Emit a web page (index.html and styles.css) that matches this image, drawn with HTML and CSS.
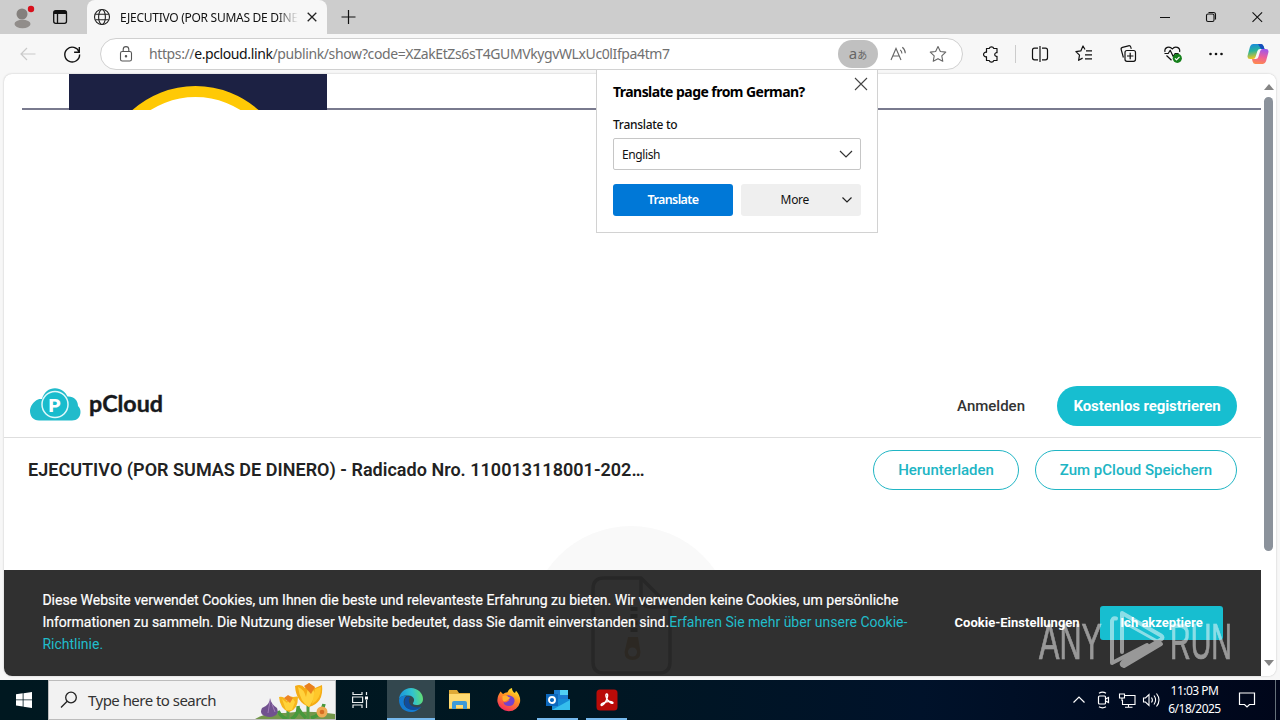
FILE: index.html
```html
<!DOCTYPE html>
<html lang="en">
<head>
<meta charset="utf-8">
<title>pCloud</title>
<link rel="stylesheet" href="styles.css">
</head>
<body>
<div class="desktop">
  <header class="titlebar">
    <svg class="avatar" width="40" height="34" viewBox="0 0 40 34"><circle cx="22" cy="14" r="5.5" fill="#84807d"/><ellipse cx="22.5" cy="24" rx="8" ry="4.2" fill="#918d8a"/><circle cx="31" cy="9" r="3.2" fill="#d8101c"/></svg>
    <svg class="tabmenu" width="40" height="34" viewBox="0 0 40 34" fill="none" stroke="#111" stroke-width="1.3"><rect x="13.7" y="10.7" width="12.8" height="12.6" rx="2"/><path d="M14 12.5h12" stroke-width="3"/><path d="M17.5 13v10"/></svg>
    <div class="tab">
      <svg width="18" height="18" viewBox="0 0 18 18" fill="none" stroke="#222" stroke-width="1.1"><circle cx="9" cy="9" r="7.5"/><ellipse cx="9" cy="9" rx="3.4" ry="7.5"/><path d="M2.3 6.2h13.4M2.3 11.8h13.4"/></svg>
      <span class="tab-title">EJECUTIVO (POR SUMAS DE DINERO)</span>
      <svg width="12" height="12" viewBox="0 0 12 12" stroke="#222" stroke-width="1.3"><path d="M1.7 1.7l8.6 8.6M10.3 1.7l-8.6 8.6"/></svg>
    </div>
    <svg class="newtab" width="16" height="16" viewBox="0 0 16 16" stroke="#111" stroke-width="1.2"><path d="M8.500 1v14M1.500 8h14"/></svg>
    <div class="window-controls">
      <svg width="46" height="34" viewBox="0 0 46 34" stroke="#111"><path d="M18 17.500h10"/></svg>
      <svg width="46" height="34" viewBox="0 0 46 34" fill="none" stroke="#111" stroke-width="1.1"><rect x="18.500" y="14" width="7.500" height="7.500" rx="1.500"/><path d="M20.500 12.500h5a2 2 0 0 1 2 2v5"/></svg>
      <svg width="46" height="34" viewBox="0 0 46 34" stroke="#111" stroke-width="1.1"><path d="M18.500 12.300l9.600 9.600M28.100 12.300l-9.600 9.600"/></svg>
    </div>
  </header>

  <div class="toolbar">
    <svg class="back" width="18" height="16" viewBox="0 0 18 16" fill="none" stroke="#c9c9c9" stroke-width="1.2"><path d="M16.500 8H2M8 2L2 8l6 6"/></svg>
    <svg class="reload" width="20" height="20" viewBox="0 0 20 20" fill="none" stroke="#111" stroke-width="1.4"><path d="M17.200 8.200A7.400 7.400 0 1 0 17.600 10.500"/><path d="M17.300 3v5.200h-5.200"/></svg>
    <div class="address">
      <svg class="lock" width="16" height="18" viewBox="0 0 16 18" fill="none" stroke="#555" stroke-width="1.1"><rect x="2.500" y="6.500" width="11" height="9.500" rx="1.800"/><path d="M5.200 6.500V4.400a2.800 2.800 0 0 1 5.600 0v2.100"/><circle cx="8" cy="11.200" r=".7" fill="#555"/></svg>
      <span class="url">https://<b>e.pcloud.link</b>/publink/show?code=XZakEtZs6sT4GUMVkygvWLxUc0lIfpa4tm7</span>
      <span class="translate-pill"><span class="latin">a</span><span class="kana">あ</span></span>
      <svg class="bar-icon" width="40" height="28" viewBox="0 0 40 28" fill="none" stroke="#666" stroke-width="1.1"><path d="M13 20L18 8.500 23 20M14.800 16h6.400M22.200 9.800q1.700 1.400 1.700 3.600M24.300 7.200q3 2.400 3 6"/></svg>
      <svg class="bar-icon" width="40" height="28" viewBox="0 0 40 28" fill="none" stroke="#666" stroke-width="1.1" stroke-linejoin="round"><path d="M20 6.500l2.350 4.950 5.400.7-3.950 3.750.97 5.350L20 18.650l-4.770 2.600.97-5.350-3.950-3.750 5.400-.7z"/></svg>
    </div>
    <div class="tools">
      <svg class="tool" viewBox="0 0 44 40" fill="none" stroke="#111" stroke-width="1.2" stroke-linejoin="round"><path d="M17.500 14.500h2.700a2.400 2.400 0 0 1 4.600 0H28v4.200h-1a1.900 1.900 0 0 0 0 3.600h1v4.200h-3.200a2.400 2.400 0 0 1-4.600 0h-2.700v-3.800a2.300 2.300 0 1 1 0-4.400z"/></svg>
      <span class="tool-separator"></span>
      <svg class="tool" viewBox="0 0 44 40" fill="none" stroke="#111" stroke-width="1.2"><path d="M20 14.200h-3.500a2 2 0 0 0-2 2v7.600a2 2 0 0 0 2 2H20M24 14.200h3.500a2 2 0 0 1 2 2v7.600a2 2 0 0 1-2 2H24M22 12v16"/></svg>
      <svg class="tool" viewBox="0 0 44 40" fill="none" stroke="#111" stroke-width="1.2" stroke-linejoin="round"><path d="M23 15.500l-2-3.500-2.200 4.900-4.900.7 3.600 3.500-.9 5.200 4-2.200M24 16.800h6M23 20.800h7M23 24.800h7"/></svg>
      <svg class="tool" viewBox="0 0 44 40" fill="none" stroke="#111" stroke-width="1.2"><path d="M17.400 23.500l-2.200-7.800a1.900 1.900 0 0 1 1.300-2.300l5.900-1.600a2 2 0 0 1 2.400 1.400l.5 1.600"/><rect x="19" y="16.500" width="10.500" height="10.800" rx="2"/><path d="M24.200 18.800v6.400M21 22h6.400"/></svg>
      <svg class="tool" viewBox="0 0 44 40" fill="none" stroke="#111" stroke-width="1.2" stroke-linejoin="round"><path d="M15 18c-1-4.500 4.500-6.800 7.300-3 2.800-3.800 8.300-1.500 7.300 3M14.500 19.500h3.700l2-3.200 3 6.200 1.900-3h3.500M16.500 21.500l5 4.800"/><circle cx="27.300" cy="24.300" r="4.600" fill="#16801c" stroke="none"/><path d="M25 24.300l1.500 1.500 3-3" stroke="#fff"/></svg>
      <svg class="tool" viewBox="0 0 44 40" fill="#111"><circle cx="16.500" cy="20" r="1.300"/><circle cx="22" cy="20" r="1.300"/><circle cx="27.500" cy="20" r="1.300"/></svg>
      <svg class="copilot" width="22" height="22" viewBox="0 0 22 22"><defs><linearGradient id="cp1" x1="0" y1="0" x2=".2" y2="1"><stop offset="0" stop-color="#1784e6"/><stop offset=".5" stop-color="#28b49b"/><stop offset="1" stop-color="#f0c520"/></linearGradient><linearGradient id="cp2" x1=".5" y1="0" x2=".3" y2="1"><stop offset="0" stop-color="#a157e8"/><stop offset=".5" stop-color="#ed5f9a"/><stop offset="1" stop-color="#ff8b4c"/></linearGradient></defs><path d="M6 1h8q2 0 2.700 2.500L17.500 6H13q-2 0-2.600 2L8.500 14q-.6 2-2.500 2H3q-3.200 0-2.300-3.800L3 3.800Q3.800 1 6 1z" fill="url(#cp1)"/><path d="M11 1h3.200q1.800 0 2.500 2.500L17.500 6H14z" fill="#154fbd"/><path d="M16 21H8.400q-2 0-2.800-2.500L5 16h3.800q2 0 2.600-2l1.800-6q.6-2 2.500-2H19q3.200 0 2.300 3.800L19 18.200Q18 21 16 21z" fill="url(#cp2)"/></svg>
    </div>
  </div>

  <div class="viewport">
    <main class="page">
      <svg class="banner" width="1257" height="36" viewBox="0 0 1257 36"><path d="M18 35h1239" stroke="#4c4e68" stroke-width="1.600"/><path d="M65 0h258v36H65z" fill="#1c2143"/><circle cx="191.500" cy="107" r="89.500" fill="#fff" stroke="#ffc905" stroke-width="11"/></svg>
      <div class="blank"></div>
      <div class="site-header">
        <svg class="logo" width="136" height="38" viewBox="0 0 136 38"><path d="M10 35.500C4 35.500 1 31 1 26c0-5 3.500-9.500 8-11.500 1.500-.7 3.300-.3 4-.5C15 7 20 3.200 26 3.200S36.500 7 38.500 11.500c6-.5 10.500 3.500 10.500 9.500 1.500 1.500 2.500 3 2.500 6 0 5-3.500 8.500-8.500 8.500z" fill="#21bbcb"/><circle cx="26" cy="19.500" r="13" fill="#19bccd" stroke="#e0f8fb" stroke-width="1.500"/><text x="19.500" y="26.500" class="logo-p">P</text><text x="60" y="26.500" class="logo-name" textLength="74" lengthAdjust="spacingAndGlyphs">pCloud</text></svg>
        <a class="login">Anmelden</a>
        <a class="button filled">Kostenlos registrieren</a>
      </div>
      <div class="file-header">
        <h1>EJECUTIVO (POR SUMAS DE DINERO) - Radicado Nro. 110013118001-202…</h1>
        <a class="button download">Herunterladen</a>
        <a class="button save">Zum pCloud Speichern</a>
      </div>
      <div class="preview">
        <svg width="204" height="150" viewBox="0 0 204 150"><circle cx="102" cy="102" r="102" fill="#f9f9f9"/><path d="M75 52h37l29 29v55q0 11-11 11H75q-11 0-11-11V63q0-11 11-11z" fill="#fff" stroke="#555" stroke-width="3.500"/><path d="M112 52v19q0 10 10 10h19" fill="none" stroke="#555" stroke-width="3.500"/><path d="M105 81v28" stroke="#201500" stroke-width="7" stroke-dasharray="4 3"/><path d="M99 111h10l2.500 15q0 8-8 8t-8-8z" fill="#b06d00"/><circle cx="103.500" cy="126" r="4.500" fill="#fff"/></svg>
      </div>
      <div class="cookies">
        <p>Diese Website verwendet Cookies, um Ihnen die beste und relevanteste Erfahrung zu bieten. Wir verwenden keine Cookies, um persönliche<br>Informationen zu sammeln. Die Nutzung dieser Website bedeutet, dass Sie damit einverstanden sind.<a>Erfahren Sie mehr über unsere Cookie-<br>Richtlinie.</a></p>
        <a class="cookie-settings">Cookie-Einstellungen</a>
        <a class="accept"><span>Ich akzeptiere</span></a>
      </div>
    </main>
    <aside class="scrollbar">
      <svg width="10" height="6" viewBox="0 0 10 6"><path d="M0 6L5 0l5 6z" fill="#858585"/></svg>
      <span class="thumb"></span>
      <svg width="10" height="6" viewBox="0 0 10 6"><path d="M0 0h10L5 6z" fill="#858585"/></svg>
    </aside>
  </div>

  <footer class="taskbar">
    <div class="start"><svg width="16" height="16" viewBox="0 0 16 16" fill="#fff"><path d="M0 2.300L6.700 1.300V7.500H0zM7.500 1.200L16 0v7.500H7.500zM0 8.300h6.700v6.300L0 13.600zM7.500 8.300H16V16l-8.500-1.200z"/></svg></div>
    <div class="search">
      <svg width="18" height="18" viewBox="0 0 18 18" fill="none" stroke="#222" stroke-width="1.300"><circle cx="11" cy="6.500" r="5.300"/><path d="M7.200 10.300L1 16.500"/></svg>
      <span>Type here to search</span>
      <svg class="flowers" width="80" height="38" viewBox="0 0 80 38"><path d="M0 38Q10 31 30 32q25-3 50 1v5z" fill="#74974b"/><path d="M33 38V28M53 38V24" stroke="#519b43" stroke-width="3"/><path d="M36 38q8-4 7-13M32 38q-6-2-9-8M56 37q11-3 13-14M51 37q-5-4-8-10" stroke="#47983d" stroke-width="3.500" fill="none"/><path d="M24 16q5-1 8 4 3-5 6-4 5-1 5 0 0 13-9 15-9-3-10-15z" fill="#f6b51c"/><path d="M27 18l5 4 4-7 4 6-3 8h-6z" fill="#ffd33b"/><path d="M29 17l4-3 5 3-3 5z" fill="#ed8423"/><path d="M40 5q6-3 10 2l4-5 6 5 7-3q2 18-13 22Q41 21 40 5z" fill="#f5ac15"/><path d="M43 6q6 2 8 10l3-14 7 12-7 12q-9-5-11-20z" fill="#ffd23d"/><path d="M60 8l6-2q0 12-9 17z" fill="#ffc72a"/><path d="M49 5l5-3 6 4-4 7z" fill="#e9801e"/><path d="M15 17q1 6 7 10 3 8-7 9-12-1-8-9 8-3 8-10z" fill="#71518f"/><path d="M15 20l-2 12M17 23l3 8" stroke="#a27db9" fill="none"/><circle cx="67" cy="31" r="5.500" fill="#efaa53"/><circle cx="67" cy="31" r="2.300" fill="#d66e22"/></svg>
    </div>
    <div class="task view"><svg width="18" height="18" viewBox="0 0 18 18" fill="none" stroke="#e9edee" stroke-width="1.200"><path d="M2 1v2.500h9V1M2 17v-3h9v3M1.600 6h10v5.500h-10zM15.500 1v3M15.500 9v8"/><path d="M14 5.500h3v3h-3z" fill="#fff" stroke="none"/></svg></div>
    <div class="task active"><svg width="26" height="26" viewBox="0 0 26 26"><defs><linearGradient id="ed" x1="0" y1=".3" x2="1" y2=".2"><stop offset="0" stop-color="#1995dc"/><stop offset=".55" stop-color="#31c3cf"/><stop offset="1" stop-color="#65e06c"/></linearGradient></defs><path d="M1 13C1 6 6.500 1 13 1s12 5 12 11c0 4-3 6-6.500 6-3 0-4.300-1.100-3.300-2.300C17 13.500 16.500 9 10.500 8.500 5 8.200 1 10 1 13z" fill="url(#ed)"/><path d="M1 13C1.300 10 5 8.300 9 8.500c-4 2-5.500 11 2 13.500 4.500 1.500 9 .5 12-2.500C21 23 17 25 13 25 6 25 1 20 1 13z" fill="#147bd1"/><path d="M9 9.500c-4 3-3.500 11 3 13 4.500 1.200 8.500.2 11-2.700-5 1.800-11 0-12-5-.4-2 .2-3.600 1.300-4.500-.9-.7-2-1-3.300-.8z" fill="#104d9e"/></svg></div>
    <div class="task"><svg width="24" height="22" viewBox="0 0 24 22"><path d="M1 1h8l2 3h11v16H1z" fill="#dfaa37"/><path d="M1 5h21v14H1z" fill="#ffda71"/><path d="M6 12h11q2 0 2 2v6h-4v-4H8v4H4v-6q0-2 2-2z" fill="#3e9ad7"/></svg></div>
    <div class="task"><svg width="26" height="26" viewBox="0 0 26 26"><defs><linearGradient id="ff" x1=".8" y1="0" x2=".3" y2="1"><stop offset="0" stop-color="#fff02f"/><stop offset=".4" stop-color="#ff9820"/><stop offset="1" stop-color="#f52761"/></linearGradient></defs><path d="M2.500 8L4.500 4.500 7 7q2-1.500 4.500-1.700Q13 1.500 16 1q0 3.500 3 5l1-2.300q5 5.300 4 11.500A11.500 11.500 0 0 1 1.500 15Q1 11 2.500 8z" fill="url(#ff)"/><path d="M9 9.500q3-2 6-.5 4 1.500 3.500 5.500-1 4.500-5.500 4.500-5 0-5.500-4 2 1 4-.5l2-1.500z" fill="#7442cd"/><path d="M6.500 9q4-1.200 6 1l2 .8-3 2.200q-4 3-5-.5z" fill="#ffb02f"/></svg></div>
    <div class="task running"><svg width="26" height="24" viewBox="0 0 26 24"><path d="M9 2h14v9H9z" fill="#1b7dd1"/><path d="M15 2h8v5h-8z" fill="#50d0f4"/><path d="M7 11h18v11H7z" fill="#158cd6"/><path d="M7 22l18-10v10z" fill="#36bfed"/><path d="M1 6h12v12H1z" fill="#0c68bd"/><circle cx="7" cy="12" r="3" fill="none" stroke="#fff" stroke-width="1.900"/></svg></div>
    <div class="task running"><svg width="22" height="22" viewBox="0 0 22 22"><rect x=".5" y=".5" width="21" height="21" rx="3.500" fill="#b90b08"/><path d="M10.500 5c2.200-.5.800 4.500-.7 7.300-1.200 2.300-3.800 4.900-4.600 4-.9-1.300 3.300-3.200 6.800-3.700 2.300-.3 5-.1 5 1.200-.3 1.800-5.300-1.500-6.500-4.800-.8-2-.9-3.700 0-4z" fill="none" stroke="#fff" stroke-width="1.400"/></svg></div>
    <div class="tray">
      <svg width="24" height="24" viewBox="0 0 24 24" fill="none" stroke="#fff" stroke-width="1.200"><path d="M6.500 14.500L12 9l5.500 5.500"/></svg>
      <svg width="24" height="24" viewBox="0 0 24 24" fill="none" stroke="#fff" stroke-width="1.200"><rect x="7.500" y="8" width="7" height="8" rx="1"/><path d="M14.500 11l3-1.500v5l-3-1.500M8 5.200q3.500-2 7 0M8 18.800q3.500 2 7 0"/></svg>
      <svg width="24" height="24" viewBox="0 0 24 24" fill="none" stroke="#fff" stroke-width="1.100"><path d="M10 7.500h10v9H7.500V12M13.500 16.500v2.500M10 19.300h7.500M4.500 6h5v4h-5zM7 10v3"/></svg>
      <svg width="24" height="24" viewBox="0 0 24 24" fill="none" stroke="#fff" stroke-width="1.100"><path d="M4.500 10h2l3.500-3.500v11L6.500 14h-2zM12.500 9.500q1.800 2.500 0 5M15 7.500q3.200 4.500 0 9M17.500 5.500q5 6.500 0 13"/></svg>
      <div class="clock"><span>11:03 PM</span><span>6/18/2025</span></div>
      <svg class="notice" width="18" height="18" viewBox="0 0 18 18" fill="none" stroke="#fff" stroke-width="1.200"><path d="M1.500 2h15v11.500h-5L9 16l-2.500-2.500h-5z"/></svg>
      <span class="show-desktop"></span>
    </div>
  </footer>

  <section class="translate-popup">
    <svg class="popup-close" width="14" height="14" viewBox="0 0 14 14" stroke="#444" stroke-width="1.100"><path d="M1 1l12 12M13 1L1 13"/></svg>
    <h2>Translate page from German?</h2>
    <label>Translate to</label>
    <div class="select"><span>English</span><svg width="14" height="8" viewBox="0 0 14 8" fill="none" stroke="#333" stroke-width="1.200"><path d="M1 1l6 6 6-6"/></svg></div>
    <div class="actions">
      <span class="primary">Translate</span>
      <span class="more"><span>More</span><svg width="12" height="8" viewBox="0 0 12 8" fill="none" stroke="#222" stroke-width="1.200"><path d="M1.500 1.500L6 6l4.500-4.500"/></svg></span>
    </div>
  </section>

  <svg class="watermark" width="194" height="64" viewBox="0 0 194 64"><text x="1" y="51" textLength="63" lengthAdjust="spacingAndGlyphs">ANY</text><text x="132" y="51" textLength="62" lengthAdjust="spacingAndGlyphs">RUN</text><g fill="none" stroke="#fff" stroke-width="4" stroke-linejoin="round" stroke-linecap="round"><path d="M78 10.500q-4-1-4 4V55l35-18M84 44V5l39 22.500q3 2 0 4L85 54q-3 3 1 4l37-22"/><path d="M85 14l34 19" stroke-width="3"/></g></svg>
</div>
</body>
</html>
```
FILE: styles.css
```css
* { box-sizing: border-box; }
body { margin: 0; overflow: hidden; font-family: "Noto Sans", "Open Sans", sans-serif; }
svg { display: block; flex: none; }
.desktop { position: relative; width: 1280px; height: 720px; display: flex; flex-direction: column; background: #f7f7f7; overflow: hidden; }

.titlebar { height: 34px; flex: none; display: flex; background: #cdcdcd; }
.tabmenu { margin-right: 7px; }
.tab { width: 240px; height: 34px; display: flex; align-items: center; padding: 0 9px 0 6px; border-radius: 8px 8px 0 0; background: #f7f7f7; }
.tab-title { width: 178px; margin: 0 8px 0 9px; overflow: hidden; white-space: nowrap; font-size: 12px; letter-spacing: -0.28px; color: #111; mask-image: linear-gradient(90deg, #000 88%, transparent); }
.newtab { margin: 9px 0 0 13px; }
.window-controls { display: flex; margin-left: auto; }

.toolbar { height: 40px; flex: none; display: flex; align-items: center; }
.back { margin-left: 19px; }
.reload { margin-left: 25px; }
.address { width: 863px; height: 32px; margin-left: 18px; display: flex; align-items: center; padding: 0 4px 0 17px; background: #fff; border: 1px solid #d0d0d0; border-radius: 16px; }
.url { margin: -1px 0 0 15px; white-space: nowrap; font-size: 14px; letter-spacing: -0.39px; color: #707070; }
.url b { font-weight: 400; color: #111; }
.translate-pill { width: 40px; height: 28px; margin-left: auto; display: flex; align-items: center; justify-content: center; border-radius: 14px; background: #c0c0c0; color: #666; }
.latin { font-size: 15px; line-height: 20px; margin-top: -3px; }
.kana { font: 10px "Noto Sans CJK JP", sans-serif; }
.tools { display: flex; align-items: center; margin-left: 6px; }
.tool { width: 44px; height: 40px; }
.tool-separator { width: 1px; height: 18px; margin: 0 2px; background: #ccc; }
.copilot { margin-left: 9px; }

.viewport { width: 1272px; height: 602px; margin-left: 4px; flex: none; display: flex; border-radius: 8px; overflow: hidden; background: #fff; box-shadow: 0 0 2px #bbb; }
.page { width: 1257px; display: flex; flex-direction: column; font-family: Roboto, sans-serif; }
.banner { height: 36px; }
.blank { height: 264px; flex: none; }
.site-header { height: 64px; flex: none; display: flex; align-items: center; padding: 0 24px; border-bottom: 1px solid #dedede; }
.logo { margin: -4px 0 0 1px; }
.logo-p { font: 900 19px Roboto, sans-serif; fill: #fff; }
.logo-name { font: 700 22px Lato, sans-serif; fill: #17191c; stroke: #17191c; stroke-width: .4px; }
.login { margin: 0 32px 0 auto; font-size: 15px; font-weight: 500; color: #333; }
.button { height: 40px; display: flex; align-items: center; justify-content: center; border: 1px solid #20b5c4; border-radius: 20px; color: #20b5c4; font-size: 15px; font-weight: 500; white-space: nowrap; }
.filled { width: 180px; background: #17bed0; border: 0; color: #fff; font-weight: 700; letter-spacing: -0.1px; }
.file-header { height: 64px; flex: none; display: flex; align-items: center; padding: 0 24px; }
h1 { margin: -2px auto 0 0; font-size: 18px; font-weight: 600; letter-spacing: .02px; color: #222; white-space: nowrap; }
.download { width: 146px; margin-right: 16px; }
.save { width: 202px; }
.preview { height: 68px; flex: none; display: flex; justify-content: center; padding: 24px 4px 0 0; }
.cookies { position: relative; height: 106px; flex: none; display: flex; align-items: center; padding: 0 38px; background: rgba(37, 37, 37, .95); color: #fff; }
.cookies p { width: 912px; margin: -2px 0 0; padding-left: .4px; font-size: 14px; line-height: 22px; white-space: nowrap; -webkit-text-stroke: .2px; }
.cookies p a { color: #21bdcb; -webkit-text-stroke: 0; }
.cookie-settings { width: 126px; margin-top: -2px; padding-left: .6px; font-size: 13px; font-weight: 700; white-space: nowrap; }
.accept { width: 123px; height: 34px; margin-left: 20px; display: flex; align-items: center; justify-content: center; border-radius: 3px; background: #17bed0; font-size: 13px; font-weight: 700; }
.accept span { margin-top: -2px; }
.scrollbar { width: 15px; display: flex; flex-direction: column; align-items: center; padding: 10px 0; background: #fff; }
.thumb { width: 9px; height: 454px; margin: 7px 0 auto; border-radius: 5px; background: #8b929b; }

.taskbar { height: 40px; margin-top: 4px; flex: none; display: flex; background: linear-gradient(90deg, #001820, #001722 45%, #00122a 72%, #00061a); }
.start { width: 48px; display: grid; place-items: center; }
.search { width: 288px; display: flex; align-items: center; padding-left: 11px; background: #f2f2f2; border: 1px solid #bcbcbc; font-size: 15px; color: #333; }
.search span { margin-left: 10px; white-space: nowrap; letter-spacing: -0.53px; }
.flowers { margin-left: auto; }
.task { width: 49px; display: grid; place-items: center; }
.view { width: 50px; padding-right: 3px; }
.active { background: linear-gradient(#33474e, #33474e) no-repeat 1px 0 / 48px 100%; }
.active, .running { position: relative; }
.active::after, .running::after { content: ""; position: absolute; left: 4px; bottom: 0; width: 41px; height: 2px; background: #76b9ed; }
.active::after { left: 1px; width: 48px; }
.tray { display: flex; align-items: center; margin-left: auto; color: #fff; }
.clock { width: 63px; display: flex; flex-direction: column; align-items: center; font-size: 12px; line-height: 18px; letter-spacing: -0.5px; white-space: nowrap; }
.notice { margin: 0 19px 0 12px; }
.show-desktop { width: 5px; height: 40px; border-left: 1px solid #65717a; }

.translate-popup { position: absolute; left: 596px; top: 69px; width: 282px; height: 164px; padding: 13px 16px; display: flex; flex-direction: column; background: #fff; border: 1px solid #d2d2d2; font-size: 12px; color: #111; }
.popup-close { position: absolute; right: 9px; top: 7px; }
h2 { margin: 0; height: 18px; font-size: 14px; line-height: 18px; font-weight: 700; letter-spacing: -0.55px; color: #000; }
label { margin: 15px 0 4px; line-height: 18px; font-weight: 500; letter-spacing: -.3px; }
.select { height: 32px; flex: none; display: flex; align-items: center; justify-content: space-between; padding: 0 7px 0 8px; border: 1px solid #c6c6c6; border-radius: 2px; letter-spacing: -0.4px; }
.actions { display: flex; gap: 8px; margin-top: 14px; }
.primary, .more { width: 120px; height: 32px; display: flex; align-items: center; justify-content: center; border-radius: 3px; padding-bottom: 1px; }
.primary { background: #0078d7; color: #fff; font-weight: 600; letter-spacing: -0.6px; font-size: 12.5px; }
.more { background: #efefef; justify-content: flex-end; gap: 32px; padding-right: 8px; letter-spacing: -.3px; }
.watermark { position: absolute; left: 1038px; top: 608px; opacity: .5; }
.watermark text { font: 50px "Liberation Sans", sans-serif; fill: #fff; stroke: #fff; stroke-width: .7px; }
```
